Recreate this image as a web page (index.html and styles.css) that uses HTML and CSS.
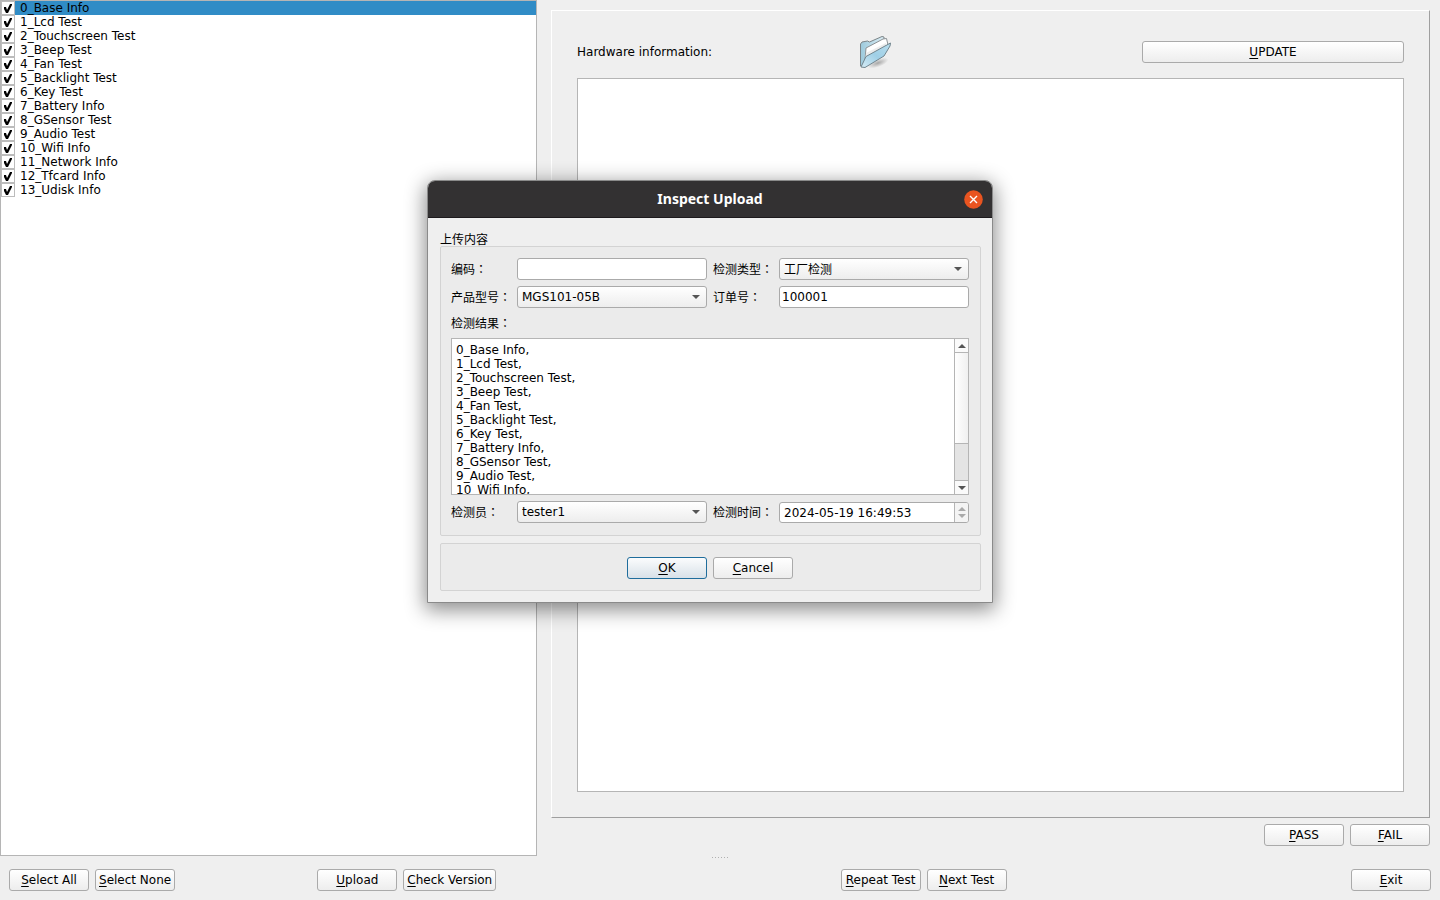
FILE: index.html
```html
<!DOCTYPE html>
<html lang="en">
<head>
<meta charset="utf-8">
<title>Hardware Test</title>
<link rel="stylesheet" href="styles.css">
</head>
<body>
<div class="app">
  <main class="workspace">
    <ul class="tests">
      <li class="test selected"><input type="checkbox" id="t0" checked><label for="t0">0_Base Info</label></li>
      <li class="test"><input type="checkbox" id="t1" checked><label for="t1">1_Lcd Test</label></li>
      <li class="test"><input type="checkbox" id="t2" checked><label for="t2">2_Touchscreen Test</label></li>
      <li class="test"><input type="checkbox" id="t3" checked><label for="t3">3_Beep Test</label></li>
      <li class="test"><input type="checkbox" id="t4" checked><label for="t4">4_Fan Test</label></li>
      <li class="test"><input type="checkbox" id="t5" checked><label for="t5">5_Backlight Test</label></li>
      <li class="test"><input type="checkbox" id="t6" checked><label for="t6">6_Key Test</label></li>
      <li class="test"><input type="checkbox" id="t7" checked><label for="t7">7_Battery Info</label></li>
      <li class="test"><input type="checkbox" id="t8" checked><label for="t8">8_GSensor Test</label></li>
      <li class="test"><input type="checkbox" id="t9" checked><label for="t9">9_Audio Test</label></li>
      <li class="test"><input type="checkbox" id="t10" checked><label for="t10">10_Wifi Info</label></li>
      <li class="test"><input type="checkbox" id="t11" checked><label for="t11">11_Network Info</label></li>
      <li class="test"><input type="checkbox" id="t12" checked><label for="t12">12_Tfcard Info</label></li>
      <li class="test"><input type="checkbox" id="t13" checked><label for="t13">13_Udisk Info</label></li>
    </ul>
    <section class="detail">
      <div class="panel">
        <div class="panel-head">
          <label for="hardware">Hardware information:</label>
          <svg class="folder" viewBox="0 0 32 32" aria-hidden="true">
            <defs>
              <linearGradient id="back" x1="0" y1="0" x2="1" y2="0"><stop offset="0" stop-color="#9cc9dc"/><stop offset="1" stop-color="#dceef5"/></linearGradient>
              <linearGradient id="front" x1="0" y1="1" x2="1" y2="0"><stop offset="0" stop-color="#d6ecf6"/><stop offset=".5" stop-color="#9fcfe6"/><stop offset="1" stop-color="#b9deee"/></linearGradient>
              <radialGradient id="shade"><stop offset="0" stop-color="#000" stop-opacity=".3"/><stop offset="1" stop-color="#000" stop-opacity="0"/></radialGradient>
            </defs>
            <ellipse cx="18" cy="27" rx="11" ry="4" fill="url(#shade)" transform="rotate(-20 18 27)"/>
            <path d="M.5 30V8L2 6l5.500-1 2 1L22 .5l2 .5v5L4 30z" fill="url(#back)" stroke="#7d8588" stroke-width="1" stroke-linejoin="round"/>
            <path d="M6 12 23 3l3.500-.5L28 9 5 24z" fill="#fff" stroke="#8b9194" stroke-width="1" stroke-linejoin="round"/>
            <path d="M6 17 26 7v4L5 25z" fill="#ececec"/>
            <path d="M1 31 6 20.500 25 10 30.500 7 30 10 24 20 5 31.500z" fill="url(#front)" stroke="#71858e" stroke-width="1" stroke-linejoin="round"/>
          </svg>
          <button type="button" class="btn"><u>U</u>PDATE</button>
        </div>
        <textarea id="hardware" class="output"></textarea>
      </div>
      <div class="verdict">
        <button type="button" class="btn"><u>P</u>ASS</button>
        <button type="button" class="btn"><u>F</u>AIL</button>
      </div>
    </section>
  </main>
  <div class="splitter"><i></i><i></i><i></i><i></i><i></i><i></i></div>
  <footer class="toolbar">
    <button type="button" class="btn"><u>S</u>elect All</button>
    <button type="button" class="btn"><u>S</u>elect None</button>
    <span class="space-small"></span>
    <button type="button" class="btn"><u>U</u>pload</button>
    <button type="button" class="btn"><u>C</u>heck Version</button>
    <span class="space-large"></span>
    <button type="button" class="btn"><u>R</u>epeat Test</button>
    <button type="button" class="btn"><u>N</u>ext Test</button>
    <span class="space-large"></span>
    <button type="button" class="btn"><u>E</u>xit</button>
  </footer>
</div>

<div class="dialog" role="dialog" aria-labelledby="dialog-title">
  <header class="titlebar">
    <h1 id="dialog-title">Inspect Upload</h1>
    <button type="button" class="close" aria-label="Close">
      <svg viewBox="0 0 19 19"><circle cx="9.500" cy="9.500" r="9.300" fill="#e95420"/><path d="M6 6l7 7M13 6l-7 7" stroke="#fff" stroke-width="1.400"/></svg>
    </button>
  </header>
  <form class="dialog-body">
    <h2 class="group-title cjk">上传内容</h2>
    <div class="group fields">
      <label for="code" class="cjk">编码：</label>
      <input id="code" class="field" type="text">
      <label for="kind" class="cjk">检测类型：</label>
      <span class="combo"><select id="kind" class="field cjk"><option>工厂检测</option></select></span>

      <label for="model" class="cjk">产品型号：</label>
      <span class="combo"><select id="model" class="field"><option>MGS101-05B</option></select></span>
      <label for="order" class="cjk">订单号：</label>
      <input id="order" class="field" type="text" value="100001">

      <label for="result" class="wide cjk">检测结果：</label>
      <div class="result wide">
        <textarea id="result">0_Base Info,
1_Lcd Test,
2_Touchscreen Test,
3_Beep Test,
4_Fan Test,
5_Backlight Test,
6_Key Test,
7_Battery Info,
8_GSensor Test,
9_Audio Test,
10_Wifi Info,
11_Network Info,
12_Tfcard Info,
13_Udisk Info,</textarea>
        <div class="scrollbar" aria-hidden="true">
          <span class="scroll-end up"></span>
          <span class="thumb"></span>
          <span class="track"></span>
          <span class="scroll-end down"></span>
        </div>
      </div>

      <label for="tester" class="cjk">检测员：</label>
      <span class="combo"><select id="tester" class="field"><option>tester1</option></select></span>
      <label for="time" class="cjk">检测时间：</label>
      <div class="spin">
        <input id="time" type="text" value="2024-05-19 16:49:53">
        <span class="spin-buttons"><button type="button" class="up" aria-label="Later"></button><button type="button" class="down" aria-label="Earlier"></button></span>
      </div>
    </div>
    <div class="group actions">
      <button type="button" class="btn default"><u>O</u>K</button>
      <button type="button" class="btn"><u>C</u>ancel</button>
    </div>
  </form>
</div>
</body>
</html>
```
FILE: styles.css
```css
* {
  box-sizing: border-box;
}

body,
button,
input,
select,
textarea {
  margin: 0;
  color: #000;
  font-family: "DejaVu Sans", "Noto Sans CJK TC", sans-serif;
  font-size: 12px;
  line-height: 14px;
}

body {
  background: #efefef;
}

:focus {
  outline: none;
}

.cjk {
  font-family: "Noto Sans CJK TC", sans-serif;
}

.app {
  display: flex;
  flex-direction: column;
  min-height: 100vh;
}

.workspace {
  display: grid;
  grid-template-columns: 537fr 903fr;
  flex: 1;
}

/* Test list */
.tests {
  margin: 0;
  padding: 0;
  border: 1px solid #b5b5b5;
  background: #fff;
  list-style: none;
}

.test {
  display: flex;
  height: 14px;
}

.test label {
  flex: 1;
  padding-left: 5px;
}

.test.selected label {
  background: #308cc6;
}

.test input {
  appearance: none;
  width: 14px;
  height: 14px;
  border: 1px solid #bcbcbc;
  background: #fff;
}

.test input:checked::before {
  content: "";
  display: block;
  width: 12px;
  height: 12px;
  background: #000;
  clip-path: polygon(2px 5px, 4px 5px, 5px 8px, 8px 2px, 10px 2px, 10px 3px, 6px 11px, 4px 11px, 2px 7px);
}

/* Buttons */
.btn {
  min-width: 80px;
  height: 22px;
  padding: 0 3px;
  border: 1px solid #aaa;
  border-radius: 3px;
  background: linear-gradient(#fff, #ededed);
  white-space: nowrap;
}

.btn u {
  text-underline-offset: 2px;
  text-decoration-thickness: 1px;
}

.btn.default {
  border-color: #1f6d9c;
  background: linear-gradient(#fbfcfd, #d8e1e8);
}

/* Detail side */
.detail {
  display: flex;
  flex-direction: column;
  gap: 6px;
  padding: 10px 10px 10px 14px;
}

.panel {
  display: flex;
  flex: 1;
  flex-direction: column;
  gap: 10px;
  padding: 25px;
  border: 1px solid;
  border-color: #fff #9f9f9f #9f9f9f #fff;
}

.panel-head {
  display: grid;
  grid-template-columns: 283fr 282fr 262fr;
  align-items: center;
}

.folder {
  width: 32px;
  height: 32px;
}

.output {
  flex: 1;
  border: 1px solid #b5b5b5;
  background: #fff;
  resize: none;
}

.verdict {
  display: flex;
  justify-content: flex-end;
  gap: 6px;
}

.splitter {
  display: flex;
  justify-content: center;
  gap: 2px;
  padding: 1px 0 2px;
}

.splitter i {
  width: 1px;
  height: 1px;
  background: #b0b0b0;
}

.toolbar {
  display: flex;
  padding: 9px;
}

.toolbar .btn + .btn {
  margin-left: 6px;
}

.space-small {
  flex: 142;
}

.space-large {
  flex: 344;
}

/* Dialog */
.dialog {
  position: absolute;
  top: 180px;
  left: calc(50% - 293px);
  width: 566px;
  border: 1px solid #8a8a8a;
  border-radius: 8px 8px 0 0;
  background: #efefef;
  box-shadow: 0 5px 20px 2px rgba(0, 0, 0, 0.45);
}

.titlebar {
  display: grid;
  grid-template-columns: 1fr auto 1fr;
  align-items: center;
  height: 37px;
  padding: 0 9px;
  border-bottom: 1px solid #1d1a1d;
  border-radius: 7px 7px 0 0;
  background: #333132;
}

.titlebar h1 {
  grid-column: 2;
  margin: 0;
  color: #fff;
  font: bold 14px/20px "Noto Sans", sans-serif;
}

.close {
  justify-self: end;
  width: 19px;
  height: 19px;
  padding: 0;
  border: 0;
  background: none;
}

.close svg {
  display: block;
}

.dialog-body {
  padding: 14px 11px 11px 12px;
}

.group-title {
  margin: 0;
  font-size: 12px;
  font-weight: normal;
  line-height: 14px;
}

.group {
  border: 1px solid #d3d3d3;
  border-radius: 2px;
  background: #ebebeb;
}

.fields {
  display: grid;
  grid-template-columns: auto 1fr auto 1fr;
  gap: 6px;
  align-items: center;
  padding: 11px 11px 12px 10px;
}

.fields label {
  min-width: 60px;
  white-space: nowrap;
}

.wide {
  grid-column: 1 / -1;
}

label.wide {
  margin: 2px 0;
}

.field {
  display: block;
  width: 100%;
  height: 22px;
  padding: 0 2px;
  border: 1px solid #aaa;
  border-radius: 3px;
  background: #fff;
}

.combo {
  position: relative;
}

.combo .field {
  appearance: none;
  padding: 0 4px;
  background: linear-gradient(#fff, #ededed);
}

.combo::after {
  content: "";
  position: absolute;
  top: 9px;
  right: 7px;
  border: 4px solid transparent;
  border-top-color: #555;
  border-bottom: 0;
}

.result {
  display: flex;
  height: 157px;
  border: 1px solid #b5b5b5;
  background: #fff;
}

.result textarea {
  flex: 1;
  padding: 4px;
  border: 0;
  background: none;
  overflow: hidden;
  resize: none;
}

.scrollbar {
  display: flex;
  flex-direction: column;
  width: 14px;
  border-left: 1px solid #b5b5b5;
}

.scroll-end {
  display: grid;
  place-items: center;
  height: 13px;
  background: #fafafa;
}

.up::before,
.down::before {
  content: "";
  border: 4px solid transparent;
}

.up::before {
  border-top: 0;
  border-bottom-color: #555;
}

.down::before {
  border-bottom: 0;
  border-top-color: #555;
}

.thumb {
  flex: 92;
  border: solid #b5b5b5;
  border-width: 1px 0;
  background: linear-gradient(90deg, #fff, #f0f0f0);
}

.track {
  flex: 37;
  border-bottom: 1px solid #b5b5b5;
  background: #e4e4e4;
}

.spin {
  display: flex;
  align-self: end;
  height: 21px;
  border: 1px solid #aaa;
  border-radius: 3px;
  background: #fff;
}

.spin input {
  flex: 1;
  min-width: 0;
  padding: 0 4px;
  border: 0;
  background: none;
}

.spin-buttons {
  display: flex;
  flex-direction: column;
  width: 14px;
  padding: 2px 0;
  border-left: 1px solid #b5b5b5;
  border-radius: 0 2px 2px 0;
  background: #f4f4f4;
}

.spin-buttons button {
  display: grid;
  flex: 1;
  place-items: center;
  padding: 0;
  border: 0;
  background: none;
}

.spin-buttons .up::before {
  border-bottom-color: #aaa;
}

.spin-buttons .down::before {
  border-top-color: #aaa;
}

.actions {
  display: flex;
  justify-content: center;
  gap: 6px;
  margin-top: 7px;
  padding: 13px 1px 11px 0;
}
```
